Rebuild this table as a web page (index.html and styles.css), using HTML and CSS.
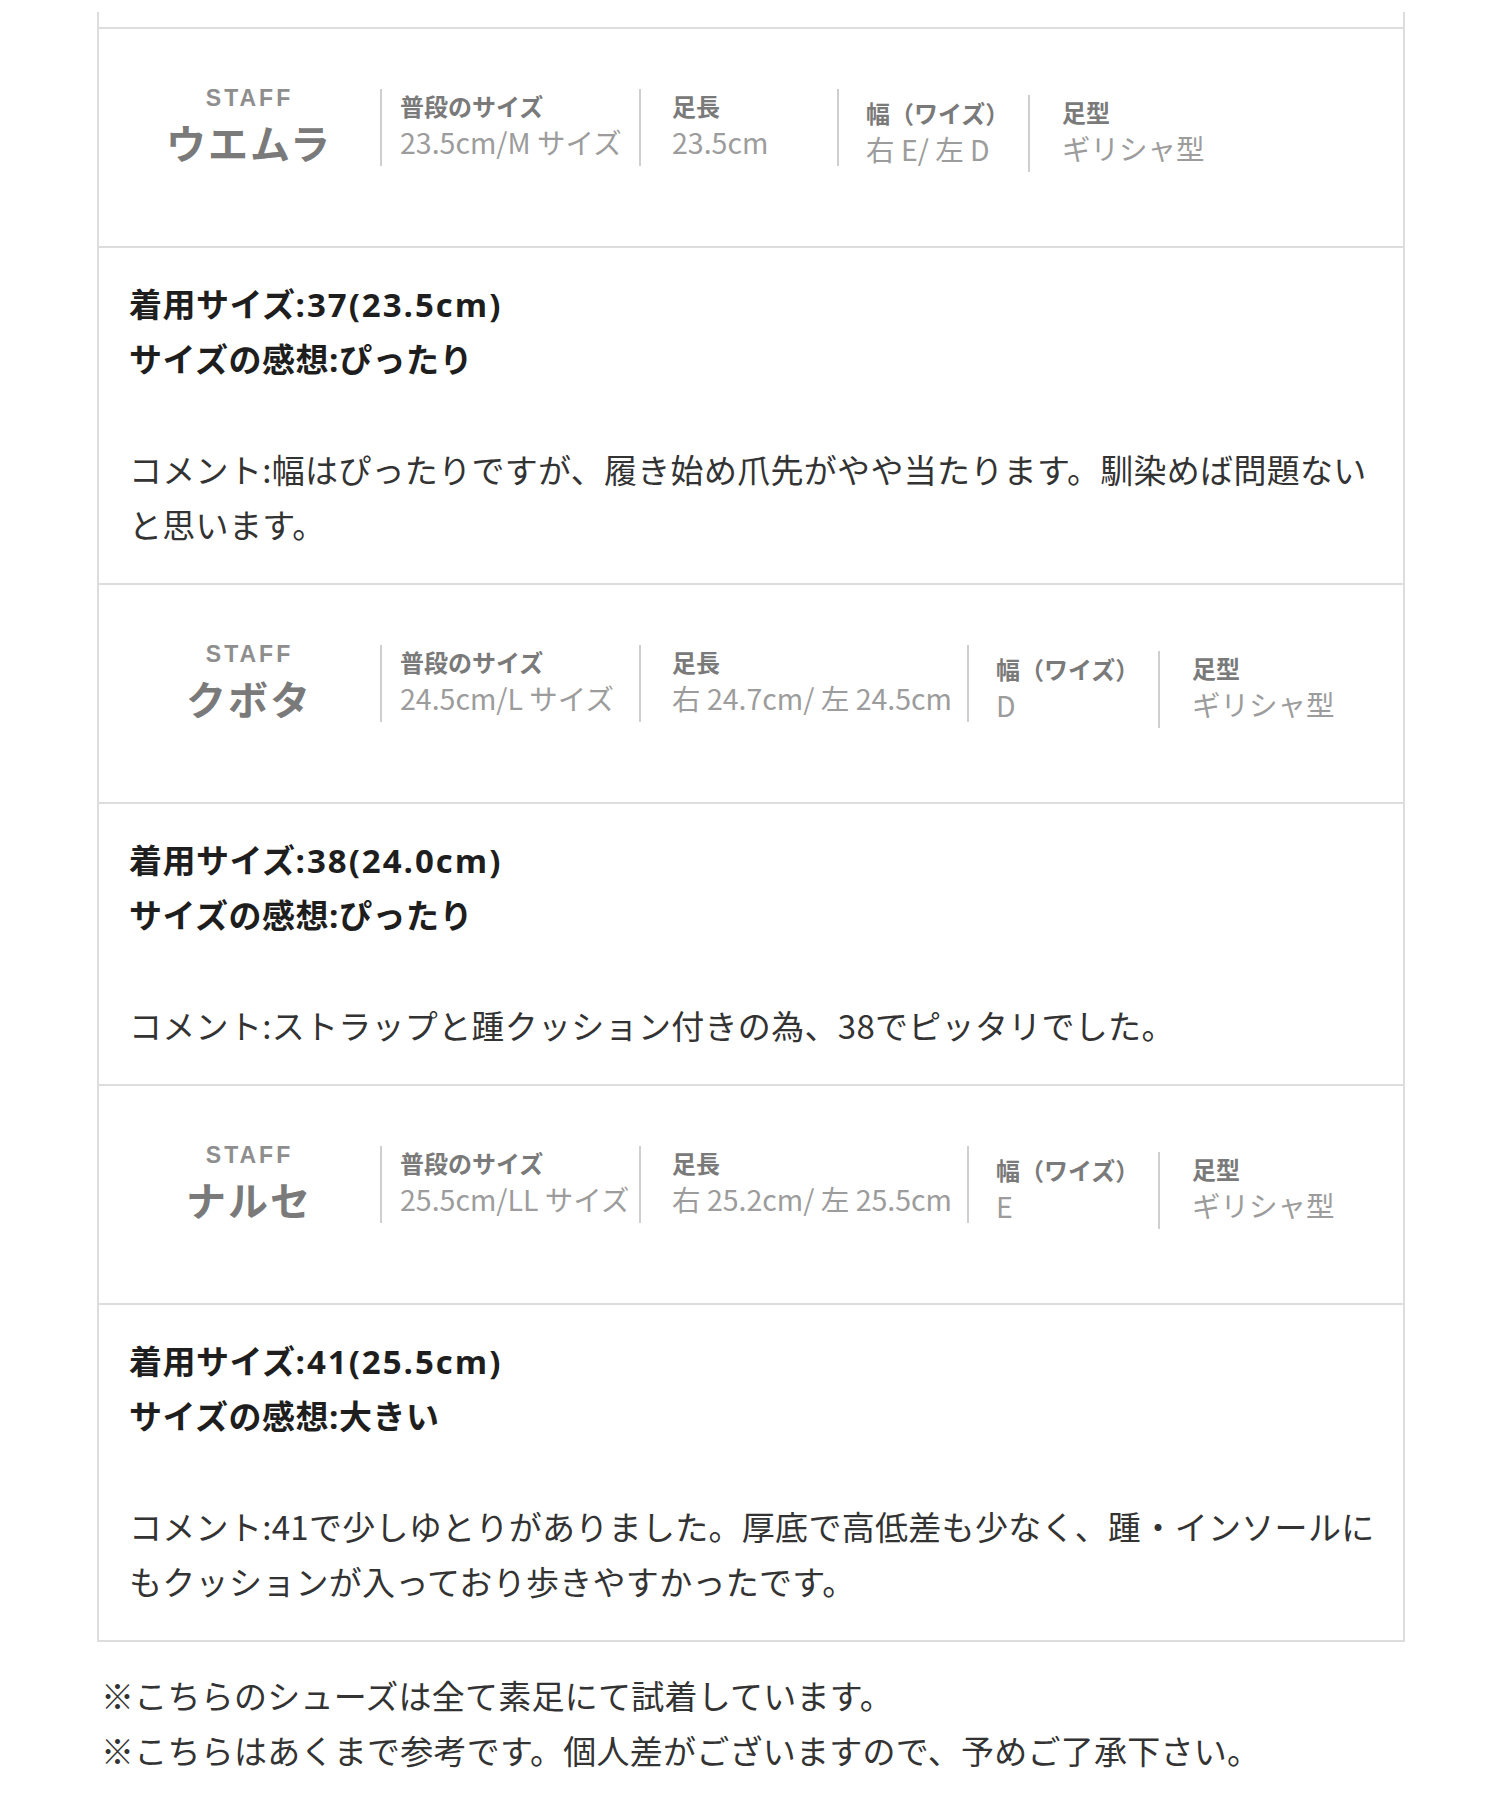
FILE: index.html
```html
<!DOCTYPE html>
<html lang="ja">
<head>
<meta charset="utf-8">
<title>STAFF 試着レビュー</title>
<link rel="stylesheet" href="styles.css">
</head>
<body>
<div class="page">
  <div class="table">
    <div class="stub"></div>

    <div class="staff">
      <div class="who">
        <div class="who-label">STAFF</div>
        <div class="who-name">ウエムラ</div>
      </div>
      <div class="col c1">
        <div class="lbl">普段のサイズ</div>
        <div class="val">23.5cm/M サイズ</div>
      </div>
      <div class="col c2">
        <div class="lbl">足長</div>
        <div class="val">23.5cm</div>
      </div>
      <div class="col c3">
        <div class="lbl">幅（ワイズ）</div>
        <div class="val">右 E/ 左 D</div>
      </div>
      <div class="col c4">
        <div class="lbl">足型</div>
        <div class="val">ギリシャ型</div>
      </div>
    </div>
    <div class="comment">
      <p class="strong">着用サイズ<span class="num">:37(23.5cm)</span><br>サイズの感想:ぴったり</p>
      <p class="text">コメント:幅はぴったりですが、履き始め爪先がやや当たります。馴染めば問題ない<br>と思います。</p>
    </div>

    <div class="staff">
      <div class="who">
        <div class="who-label">STAFF</div>
        <div class="who-name">クボタ</div>
      </div>
      <div class="col c1">
        <div class="lbl">普段のサイズ</div>
        <div class="val">24.5cm/L サイズ</div>
      </div>
      <div class="col c2 wide">
        <div class="lbl">足長</div>
        <div class="val">右 24.7cm/ 左 24.5cm</div>
      </div>
      <div class="col c3">
        <div class="lbl">幅（ワイズ）</div>
        <div class="val">D</div>
      </div>
      <div class="col c4">
        <div class="lbl">足型</div>
        <div class="val">ギリシャ型</div>
      </div>
    </div>
    <div class="comment">
      <p class="strong">着用サイズ<span class="num">:38(24.0cm)</span><br>サイズの感想:ぴったり</p>
      <p class="text">コメント:ストラップと踵クッション付きの為、38でピッタリでした。</p>
    </div>

    <div class="staff">
      <div class="who">
        <div class="who-label">STAFF</div>
        <div class="who-name">ナルセ</div>
      </div>
      <div class="col c1">
        <div class="lbl">普段のサイズ</div>
        <div class="val">25.5cm/LL サイズ</div>
      </div>
      <div class="col c2 wide">
        <div class="lbl">足長</div>
        <div class="val">右 25.2cm/ 左 25.5cm</div>
      </div>
      <div class="col c3">
        <div class="lbl">幅（ワイズ）</div>
        <div class="val">E</div>
      </div>
      <div class="col c4">
        <div class="lbl">足型</div>
        <div class="val">ギリシャ型</div>
      </div>
    </div>
    <div class="comment">
      <p class="strong">着用サイズ<span class="num">:41(25.5cm)</span><br>サイズの感想:大きい</p>
      <p class="text">コメント:41で少しゆとりがありました。厚底で高低差も少なく、踵・インソールに<br>もクッションが入っており歩きやすかったです。</p>
    </div>
  </div>

  <div class="notes">
    <p>※こちらのシューズは全て素足にて試着しています。</p>
    <p>※こちらはあくまで参考です。個人差がございますので、予めご了承下さい。</p>
  </div>
</div>
</body>
</html>
```

FILE: styles.css
```css
* {
  box-sizing: border-box;
}

html, body {
  margin: 0;
  padding: 0;
  background: #ffffff;
}

body {
  font-family: "Noto Sans CJK JP", "Noto Sans", sans-serif;
  color: #333333;
}

.page {
  padding: 12px 0 0 97px;
  width: 1405px;
}

.table {
  width: 1308px;
  border-left: 2px solid #dddddd;
  border-right: 2px solid #dddddd;
  border-bottom: 2px solid #dddddd;
}

.stub {
  height: 15px;
}

/* staff header row */
.staff {
  display: flex;
  align-items: flex-start;
  height: 219px;
  border-top: 2px solid #dddddd;
  padding: 60px 0 0 17px;
}

.who {
  width: 264px;
  margin-top: -3px;
  text-align: center;
}

.who-label {
  font-family: "Liberation Sans", Arial, sans-serif;
  font-size: 23px;
  font-weight: 700;
  line-height: 24px;
  letter-spacing: 3px;
  padding-left: 3px;
  color: #8e8e8e;
}

.who-name {
  font-size: 40px;
  font-weight: 700;
  line-height: 44px;
  margin-top: 10px;
  letter-spacing: 2px;
  padding-left: 2px;
  color: #7a7a7a;
}

.col {
  height: 77px;
  border-left: 2px solid #cfcfcf;
  padding-left: 18px;
  white-space: nowrap;
}

.c1 { width: 259px; }
.c2 { width: 198px; padding-left: 31px; }
.c2.wide { width: 328px; }
.c3 { width: 191px; padding-top: 7px; padding-left: 27px; }
.c4 { margin-top: 6px; padding-left: 32px; }

.lbl {
  font-size: 24px;
  font-weight: 700;
  line-height: 34px;
  color: #7a7a7a;
}

.val {
  font-size: 28.5px;
  font-weight: 400;
  line-height: 38px;
  color: #9c9c9c;
}

/* comment row */
.comment {
  border-top: 2px solid #dddddd;
  padding: 29px 6px 31px 30px;
  font-size: 33px;
  line-height: 55px;
}

.comment p {
  margin: 0;
  white-space: nowrap;
}

.strong {
  font-family: "Open Sans", "Noto Sans CJK JP", sans-serif;
  font-weight: 700;
  color: #1e1e1e;
  letter-spacing: 0.5px;
  margin-bottom: 55px !important;
}

.num {
  letter-spacing: 2px;
}

.text {
  color: #333333;
  letter-spacing: 0.3px;
}

/* footnotes */
.notes {
  margin-top: 26px;
  padding-left: 4px;
  font-size: 33px;
  line-height: 55px;
  letter-spacing: 0.25px;
  color: #333333;
}

.notes p {
  margin: 0;
  white-space: nowrap;
}
```
